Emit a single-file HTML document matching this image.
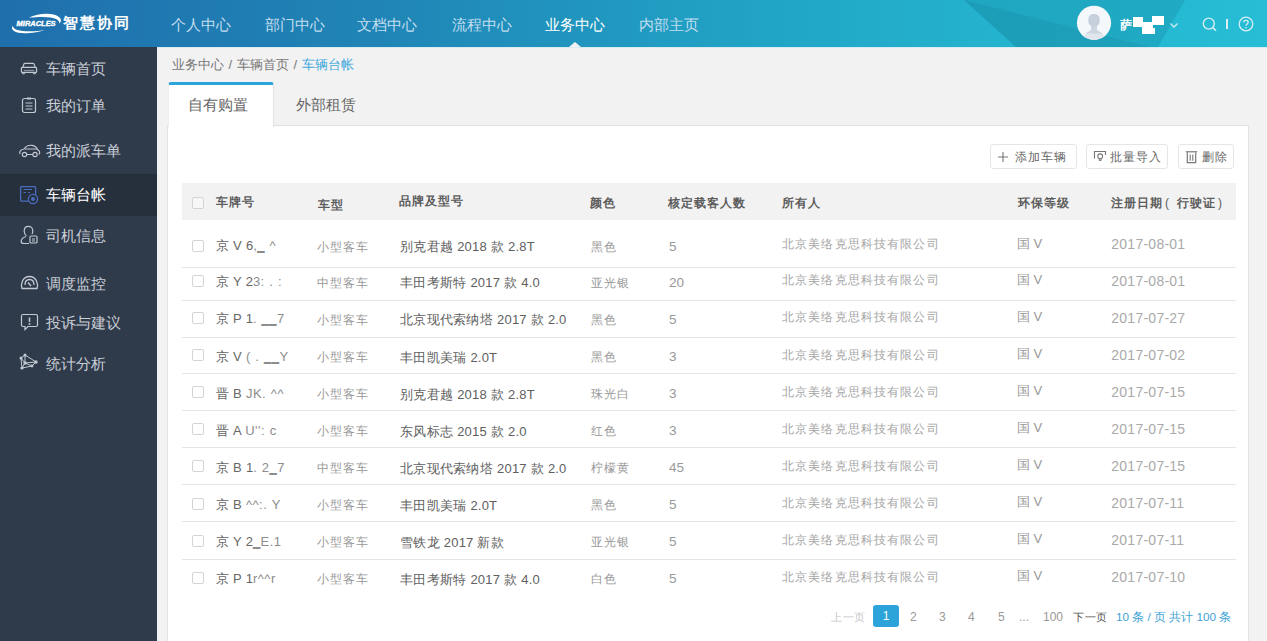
<!DOCTYPE html>
<html><head><meta charset="utf-8">
<style>
*{box-sizing:border-box;margin:0;padding:0}
html,body{width:1267px;height:641px;overflow:hidden;background:#f2f2f2;font-family:"Liberation Sans",sans-serif}
.abs{position:absolute}
#hdr{position:absolute;left:0;top:0;width:1267px;height:47px;background:linear-gradient(to right,#1f6fad 0%,#2085b6 30%,#21a4c6 60%,#24b4cf 80%,#26bdd5 100%);overflow:hidden}
.nav{position:absolute;top:15px;font-size:15px;line-height:20px;color:#c2def0;white-space:nowrap}
.nav.on{color:#fff}
#side{position:absolute;left:0;top:47px;width:157px;height:594px;background:#2f3a4b}
.si{position:absolute;left:46px;font-size:15px;line-height:20px;color:#c9ced6;white-space:nowrap}
.si.on{color:#fff}
.sic{position:absolute}
#crumb{position:absolute;left:172px;top:56px;word-spacing:1px;font-size:13px;line-height:18px;color:#777;white-space:nowrap}
#crumb span{color:#3fa9dc}
#panel{position:absolute;left:167px;top:125px;width:1082px;height:530px;background:#fff;border:1px solid #e2e2e2}
#tab1{position:absolute;left:168px;top:82px;width:106px;height:45px;background:#fff;border-top:3px solid #29a6d9;border-radius:3px 3px 0 0;border-right:1px solid #e2e2e2;border-left:1px solid #eee}
.tabt{position:absolute;top:95px;font-size:15px;line-height:20px;color:#666;white-space:nowrap}
.btn{position:absolute;top:144px;height:25px;border:1px solid #e6e6e6;border-radius:3px;background:#fff}
.btnt{position:absolute;top:148.5px;font-size:12px;letter-spacing:1px;line-height:17px;color:#666;white-space:nowrap}
#thead{position:absolute;left:182px;top:183px;width:1054px;height:37px;background:#f2f2f2}
.th{position:absolute;font-size:12px;letter-spacing:1px;line-height:17px;color:#5c5c5c;font-weight:bold;white-space:nowrap}
.cb{position:absolute;left:192px;width:12px;height:12px;border:1px solid #d4d4d4;border-radius:2px;background:#fff}
.hl{position:absolute;left:182px;width:1054px;height:1px;background:#e6e6e6}
.td{position:absolute;font-size:13px;line-height:18px;color:#999;white-space:nowrap}
.plate{left:216px;color:#666;margin-top:-0.5px;word-spacing:0.5px}
.fr{opacity:.75;letter-spacing:0.5px}
.type{left:317px;color:#999;font-size:12px;letter-spacing:1px}
.brand{left:400px;color:#606060;font-size:13px;letter-spacing:0.3px;margin-top:0.5px}
.brand .a{letter-spacing:0.2px}
.color{left:591px;color:#999;font-size:12px;letter-spacing:1px}
.seats{left:669px;color:#999;font-size:13.5px}
.owner{left:782px;color:#a5a5a5;font-size:12px;letter-spacing:1.15px;margin-top:-2.5px}
.env{left:1017px;color:#999;margin-top:-3px}
.date{left:1111.3px;color:#aaa;font-size:14px;margin-top:-2.2px;letter-spacing:0.25px}
.pg{position:absolute;top:608.5px;font-size:12px;line-height:16px;color:#999;white-space:nowrap}
</style></head><body>
<div id="hdr">
  <svg class="abs" style="left:0;top:0" width="1267" height="47">
    <polygon points="964,0 1185,0 1158,47 1016,47" fill="#1c9ab4" opacity="0.5"/>
    <polygon points="964,0 1016,47 1150,47" fill="#1a8ea8" opacity="0.35"/>
  </svg>
  <!-- logo -->
  <svg class="abs" style="left:8px;top:10px" width="56" height="28" viewBox="0 0 56 28">
    <path d="M21 7.6 C 30 3.2, 45 2.2, 51 7 C 53.5 9, 53.5 11.5, 51.5 13.5 C 51.8 9.5, 46 5.2, 21 7.6 Z" fill="#fff"/>
    <path d="M4.8 15.8 C 1.8 20.5, 8 23.8, 19 23.2 C 27 22.8, 33 21.4, 37 20 C 30 21.4, 16 22, 9.5 20 C 6.5 19, 5 17.8, 4.8 15.8 Z" fill="#fff"/>
    <text x="8.6" y="15.6" font-family="Liberation Sans" font-style="italic" font-weight="bold" font-size="6.4" fill="#fff" stroke="#fff" stroke-width="0.35" textLength="39" lengthAdjust="spacingAndGlyphs">MIRACLES</text>
  </svg>
  <div class="abs" style="left:62.5px;top:13px;font-size:15px;line-height:20px;color:#fff;font-weight:bold;letter-spacing:2.3px;white-space:nowrap">智慧协同</div>
  <div class="nav" style="left:171px">个人中心</div>
  <div class="nav" style="left:265px">部门中心</div>
  <div class="nav" style="left:357px">文档中心</div>
  <div class="nav" style="left:452px">流程中心</div>
  <div class="nav on" style="left:545px">业务中心</div>
  <div class="nav" style="left:639px">内部主页</div>
  <div class="abs" style="left:569px;top:42px;width:0;height:0;border-left:6px solid transparent;border-right:6px solid transparent;border-bottom:5px solid #f2f2f2"></div>
  <!-- avatar -->
  <svg class="abs" style="left:1076px;top:5px" width="36" height="36" viewBox="0 0 36 36">
    <circle cx="18" cy="17.8" r="17.1" fill="#f5f8fb"/>
    <clipPath id="cc"><circle cx="18" cy="17.8" r="17.1"/></clipPath>
    <g clip-path="url(#cc)">
      <ellipse cx="18" cy="32" rx="10.5" ry="5" fill="#e1e6ed"/>
      <path d="M15 20 H21 V25 C 23 26.5, 25.5 27.5, 27 28.5 H9 C 10.5 27.5, 13 26.5, 15 25 Z" fill="#ccd5e0"/>
      <rect x="12.3" y="9" width="11.4" height="12.5" rx="5" fill="#c6d0dc"/>
    </g>
  </svg>
  <div class="abs" style="left:1120px;top:16px;font-size:12px;line-height:18px;color:#fff;font-weight:bold">萨</div>
  <div class="abs" style="left:1133px;top:17px;width:10px;height:10px;background:#fff"></div>
  <div class="abs" style="left:1142px;top:22px;width:11px;height:12px;background:#fff"></div>
  <div class="abs" style="left:1152px;top:16px;width:12px;height:9px;background:#fff"></div>
  <div class="abs" style="left:1145px;top:28px;width:10px;height:6px;background:#fff"></div>
  <svg class="abs" style="left:1169px;top:22px" width="10" height="7" viewBox="0 0 10 7"><path d="M1.5 1.5 L5 5 L8.5 1.5" stroke="#cfe9f2" stroke-width="1.3" fill="none"/></svg>
  <svg class="abs" style="left:1202px;top:17px" width="16" height="15" viewBox="0 0 16 15"><circle cx="6.8" cy="6.6" r="5.5" stroke="#d8eef5" stroke-width="1.4" fill="none"/><path d="M10.8 10.6 L14 13.6" stroke="#d8eef5" stroke-width="1.5"/></svg>
  <div class="abs" style="left:1226px;top:19px;width:1.5px;height:10px;background:#d8eef5"></div>
  <svg class="abs" style="left:1238px;top:16px" width="16" height="16" viewBox="0 0 16 16"><circle cx="8" cy="8" r="6.8" stroke="#d8eef5" stroke-width="1.3" fill="none"/><path d="M5.8 6.2 C 5.8 3.8, 10.2 3.8, 10.2 6.2 C 10.2 7.8, 8 8, 8 9.8" stroke="#d8eef5" stroke-width="1.3" fill="none"/><circle cx="8" cy="11.8" r="0.8" fill="#d8eef5"/></svg>
</div>

<div class="abs" style="left:157px;top:47px;width:1110px;height:1px;background:#d9ecf4"></div>
<div id="side">
  <div class="abs" style="left:0;top:127px;width:157px;height:42px;background:#262f3c"></div>
</div>
<!-- sidebar icons & labels (page coords) -->
<svg class="sic" style="left:20px;top:62px" width="18" height="13" viewBox="0 0 18 13" fill="none" stroke="#c3c9d2" stroke-width="1.2">
  <path d="M2.7 5.4 L4 1.9 Q4.3 1.4 5 1.4 H13 Q13.7 1.4 14 1.9 L15.3 5.4"/><rect x="1.4" y="5.4" width="15.2" height="5" rx="1"/><path d="M2.6 10.4 V11.8 H4.4 V10.4 M13.6 10.4 V11.8 H15.4 V10.4" stroke-width="1"/><path d="M3.8 8.4 H14.2" stroke-width="0.7"/>
</svg>
<div class="si" style="left:46px;top:59px">车辆首页</div>
<svg class="sic" style="left:21px;top:97px" width="16" height="17" viewBox="0 0 16 17" fill="none" stroke="#c3c9d2" stroke-width="1.2">
  <rect x="1.5" y="1.5" width="13" height="14" rx="2"/><path d="M6 1.5 H10" stroke-width="2"/><path d="M4.5 6 H11.5 M4.5 9 H11.5 M4.5 12 H11.5" stroke-width="1"/>
</svg>
<div class="si" style="left:46px;top:96px">我的订单</div>
<svg class="sic" style="left:18px;top:144px" width="23" height="14" viewBox="0 0 23 14" fill="none" stroke="#c3c9d2" stroke-width="1.2">
  <path d="M2 10 C 1 7, 3 5.5, 6 5 C 8 2, 11 1, 14 1.3 C 17 1.6, 19 4, 20 6 C 22 7, 22 9, 21 10.5"/><circle cx="6.5" cy="10.5" r="2.2"/><circle cx="17" cy="10.5" r="2.2"/><path d="M8.7 10.5 H14.8 M7 5 H19"/>
</svg>
<div class="si" style="left:46px;top:141px">我的派车单</div>
<svg class="sic" style="left:19px;top:185px" width="22" height="20" viewBox="0 0 22 20" fill="none" stroke="#4a6cbc" stroke-width="1.3">
  <rect x="1.6" y="1.6" width="15" height="14.6" rx="0.8"/><path d="M4.5 4.5 H13 M4.5 7.5 H7 M9 7.5 H11" stroke-width="1.1"/><circle cx="14" cy="14" r="4.6" fill="#262f3c"/><circle cx="14" cy="14" r="2" fill="#4a6cbc" stroke="none"/>
</svg>
<div class="si on" style="left:46px;top:185px">车辆台帐</div>
<svg class="sic" style="left:20px;top:225px" width="18" height="20" viewBox="0 0 18 20" fill="none" stroke="#c3c9d2" stroke-width="1.2">
  <path d="M6.5 10.8 C 4.8 9.8, 4.2 8, 4.2 6 C 4.2 3.2, 6 1.3, 8.5 1.3 C 11 1.3, 12.8 3.2, 12.8 6 C 12.8 7.2, 12.5 8.2, 12 9"/><path d="M6 11.5 C 3 12.5, 1.2 14.5, 1.2 16.5 C 1.2 17.8, 2.2 18.5, 4 18.5 H9"/><rect x="10" y="11" width="7" height="7" rx="1"/><path d="M12 14 H15 M12 16 H15" stroke-width="1"/>
</svg>
<div class="si" style="left:46px;top:226px">司机信息</div>
<svg class="sic" style="left:20px;top:275px" width="19" height="15" viewBox="0 0 19 15" fill="none" stroke="#c3c9d2" stroke-width="1.3">
  <path d="M2 13.5 C 0.5 9, 2.5 1.5, 9.5 1.5 C 16.5 1.5, 18.5 9, 17 13.5 Z"/><path d="M5 10 C 5 6.5, 7 4.5, 9.5 4.5 C 12 4.5, 14 6.5, 14 10"/><path d="M8 7.5 L11 11" stroke-width="1.5"/>
</svg>
<div class="si" style="left:46px;top:274px">调度监控</div>
<svg class="sic" style="left:20px;top:313px" width="19" height="19" viewBox="0 0 19 19" fill="none" stroke="#c3c9d2" stroke-width="1.2">
  <path d="M3 1.5 H16 C 17 1.5, 17.5 2, 17.5 3 V12 C 17.5 13, 17 13.5, 16 13.5 H8 L5 16.5 V13.5 H3 C 2 13.5, 1.5 13, 1.5 12 V3 C 1.5 2, 2 1.5, 3 1.5 Z"/><path d="M9.5 4.5 V9" stroke-width="1.5"/><circle cx="9.5" cy="11" r="0.4" stroke-width="1.2"/>
</svg>
<div class="si" style="left:46px;top:313px">投诉与建议</div>
<svg class="sic" style="left:19px;top:353px" width="20" height="18" viewBox="0 0 20 18" fill="none" stroke="#c3c9d2" stroke-width="1">
  <path d="M2 5 L6 2 L17 9 L13 13 L3 15 Z M2 5 L6 10 L17 9 M6 2 L6 10 L3 15 M6 10 L13 13"/>
  <g fill="#c3c9d2" stroke="none"><circle cx="2" cy="5" r="1.5"/><circle cx="6" cy="2" r="1.5"/><circle cx="17" cy="9" r="1.7"/><circle cx="6" cy="10" r="1.7"/><circle cx="13" cy="13" r="1.4"/><circle cx="3" cy="15" r="1.6"/></g>
</svg>
<div class="si" style="left:46px;top:354px">统计分析</div>

<div id="crumb">业务中心 / 车辆首页 / <span>车辆台帐</span></div>
<div id="panel"></div>
<div id="tab1"></div>
<div class="tabt" style="left:188px">自有购置</div>
<div class="tabt" style="left:296px">外部租赁</div>

<div class="btn" style="left:990px;width:87px"></div>
<svg class="abs" style="left:997px;top:151px" width="12" height="12" viewBox="0 0 12 12"><path d="M6 1 V11 M1 6 H11" stroke="#777" stroke-width="1.1"/></svg>
<div class="btnt" style="left:1015px">添加车辆</div>
<div class="btn" style="left:1086px;width:82px"></div>
<svg class="abs" style="left:1093px;top:150px" width="14" height="12" viewBox="0 0 14 12" fill="none" stroke="#777" stroke-width="1.1"><path d="M1.5 8.5 V1.5 H12.5 V5"/><circle cx="7.2" cy="6.3" r="2.4"/><path d="M6.3 8.7 V10.5 H8.1 V8.7" stroke-width="1"/></svg>
<div class="btnt" style="left:1110px">批量导入</div>
<div class="btn" style="left:1178px;width:56px"></div>
<svg class="abs" style="left:1185px;top:150px" width="13" height="14" viewBox="0 0 13 14" fill="none" stroke="#777" stroke-width="1.2"><path d="M0.8 1.8 H12.2"/><path d="M2.3 2.5 V12.6 H10.7 V2.5"/><path d="M5.2 4.5 V10.8 M7.8 4.5 V10.8" stroke-width="1.1"/></svg>
<div class="btnt" style="left:1202px">删除</div>

<div id="thead"></div>
<div class="cb" style="top:197px;background:#f7f7f7"></div>
<div class="th" style="left:216px;top:194px">车牌号</div>
<div class="th" style="left:318px;top:197px">车型</div>
<div class="th" style="left:399px;top:193px">品牌及型号</div>
<div class="th" style="left:590px;top:195px">颜色</div>
<div class="th" style="left:668px;top:195px">核定载客人数</div>
<div class="th" style="left:782px;top:195px">所有人</div>
<div class="th" style="left:1018px;top:195px">环保等级</div>
<div class="th" style="left:1111px;top:195px">注册日期<span style="margin-left:2px;font-weight:normal">(</span><span style="margin-left:7px">行驶证</span><span style="margin-left:2px;font-weight:normal">)</span></div>

<div class="hl" style="top:267.0px"></div>
<div class="hl" style="top:300.0px"></div>
<div class="hl" style="top:337.0px"></div>
<div class="hl" style="top:373.0px"></div>
<div class="hl" style="top:410.0px"></div>
<div class="hl" style="top:447.0px"></div>
<div class="hl" style="top:484.0px"></div>
<div class="hl" style="top:521.0px"></div>
<div class="hl" style="top:559.0px"></div>
<div class="cb" style="top:240.0px"></div>
<div class="td plate" style="top:237.5px">京 V 6<span class='fr'>,‗ ^</span></div>
<div class="td type" style="top:237.5px">小型客车</div>
<div class="td brand" style="top:237.5px">别克君越 <span class="a">2018</span> 款 <span class="a">2.8T</span></div>
<div class="td color" style="top:237.5px">黑色</div>
<div class="td seats" style="top:237.5px">5</div>
<div class="td owner" style="top:237.5px">北京美络克思科技有限公司</div>
<div class="td env" style="top:237.5px">国 V</div>
<div class="td date" style="top:237.5px">2017-08-01</div>
<div class="cb" style="top:275.0px"></div>
<div class="td plate" style="top:273.8px">京 Y 2<span class='fr'>3: . :</span></div>
<div class="td type" style="top:273.8px">中型客车</div>
<div class="td brand" style="top:273.8px">丰田考斯特 <span class="a">2017</span> 款 <span class="a">4.0</span></div>
<div class="td color" style="top:273.8px">亚光银</div>
<div class="td seats" style="top:273.8px">20</div>
<div class="td owner" style="top:273.8px">北京美络克思科技有限公司</div>
<div class="td env" style="top:273.8px">国 V</div>
<div class="td date" style="top:273.8px">2017-08-01</div>
<div class="cb" style="top:312.1px"></div>
<div class="td plate" style="top:310.9px">京 P 1<span class='fr'>. ‗‗7</span></div>
<div class="td type" style="top:310.9px">小型客车</div>
<div class="td brand" style="top:310.9px">北京现代索纳塔 <span class="a">2017</span> 款 <span class="a">2.0</span></div>
<div class="td color" style="top:310.9px">黑色</div>
<div class="td seats" style="top:310.9px">5</div>
<div class="td owner" style="top:310.9px">北京美络克思科技有限公司</div>
<div class="td env" style="top:310.9px">国 V</div>
<div class="td date" style="top:310.9px">2017-07-27</div>
<div class="cb" style="top:349.2px"></div>
<div class="td plate" style="top:348.0px">京 V <span class='fr'>( . ‗‗Y</span></div>
<div class="td type" style="top:348.0px">小型客车</div>
<div class="td brand" style="top:348.0px">丰田凯美瑞 <span class="a">2.0T</span></div>
<div class="td color" style="top:348.0px">黑色</div>
<div class="td seats" style="top:348.0px">3</div>
<div class="td owner" style="top:348.0px">北京美络克思科技有限公司</div>
<div class="td env" style="top:348.0px">国 V</div>
<div class="td date" style="top:348.0px">2017-07-02</div>
<div class="cb" style="top:386.2px"></div>
<div class="td plate" style="top:385.0px">晋 B <span class='fr'>JK. ^^</span></div>
<div class="td type" style="top:385.0px">小型客车</div>
<div class="td brand" style="top:385.0px">别克君越 <span class="a">2018</span> 款 <span class="a">2.8T</span></div>
<div class="td color" style="top:385.0px">珠光白</div>
<div class="td seats" style="top:385.0px">3</div>
<div class="td owner" style="top:385.0px">北京美络克思科技有限公司</div>
<div class="td env" style="top:385.0px">国 V</div>
<div class="td date" style="top:385.0px">2017-07-15</div>
<div class="cb" style="top:423.3px"></div>
<div class="td plate" style="top:422.1px">晋 A <span class='fr'>U'': c</span></div>
<div class="td type" style="top:422.1px">小型客车</div>
<div class="td brand" style="top:422.1px">东风标志 <span class="a">2015</span> 款 <span class="a">2.0</span></div>
<div class="td color" style="top:422.1px">红色</div>
<div class="td seats" style="top:422.1px">3</div>
<div class="td owner" style="top:422.1px">北京美络克思科技有限公司</div>
<div class="td env" style="top:422.1px">国 V</div>
<div class="td date" style="top:422.1px">2017-07-15</div>
<div class="cb" style="top:460.4px"></div>
<div class="td plate" style="top:459.2px">京 B 1<span class='fr'>. 2‗7</span></div>
<div class="td type" style="top:459.2px">中型客车</div>
<div class="td brand" style="top:459.2px">北京现代索纳塔 <span class="a">2017</span> 款 <span class="a">2.0</span></div>
<div class="td color" style="top:459.2px">柠檬黄</div>
<div class="td seats" style="top:459.2px">45</div>
<div class="td owner" style="top:459.2px">北京美络克思科技有限公司</div>
<div class="td env" style="top:459.2px">国 V</div>
<div class="td date" style="top:459.2px">2017-07-15</div>
<div class="cb" style="top:497.5px"></div>
<div class="td plate" style="top:496.3px">京 B <span class='fr'>^^:. Y</span></div>
<div class="td type" style="top:496.3px">小型客车</div>
<div class="td brand" style="top:496.3px">丰田凯美瑞 <span class="a">2.0T</span></div>
<div class="td color" style="top:496.3px">黑色</div>
<div class="td seats" style="top:496.3px">5</div>
<div class="td owner" style="top:496.3px">北京美络克思科技有限公司</div>
<div class="td env" style="top:496.3px">国 V</div>
<div class="td date" style="top:496.3px">2017-07-11</div>
<div class="cb" style="top:534.6px"></div>
<div class="td plate" style="top:533.4px">京 Y 2<span class='fr'>‗E.1</span></div>
<div class="td type" style="top:533.4px">小型客车</div>
<div class="td brand" style="top:533.4px">雪铁龙 <span class="a">2017</span> 新款</div>
<div class="td color" style="top:533.4px">亚光银</div>
<div class="td seats" style="top:533.4px">5</div>
<div class="td owner" style="top:533.4px">北京美络克思科技有限公司</div>
<div class="td env" style="top:533.4px">国 V</div>
<div class="td date" style="top:533.4px">2017-07-11</div>
<div class="cb" style="top:571.6px"></div>
<div class="td plate" style="top:570.4px">京 P 1<span class='fr'>r^^r</span></div>
<div class="td type" style="top:570.4px">小型客车</div>
<div class="td brand" style="top:570.4px">丰田考斯特 <span class="a">2017</span> 款 <span class="a">4.0</span></div>
<div class="td color" style="top:570.4px">白色</div>
<div class="td seats" style="top:570.4px">5</div>
<div class="td owner" style="top:570.4px">北京美络克思科技有限公司</div>
<div class="td env" style="top:570.4px">国 V</div>
<div class="td date" style="top:570.4px">2017-07-10</div>

<div class="pg" style="left:831px;color:#c8c8c8;font-size:11px;letter-spacing:0.6px">上一页</div>
<div class="abs" style="left:873px;top:605px;width:26px;height:22px;background:#2ca4d9;border-radius:3px;color:#fff;font-size:12px;line-height:22px;text-align:center">1</div>
<div class="pg" style="left:910px">2</div>
<div class="pg" style="left:939px">3</div>
<div class="pg" style="left:968px">4</div>
<div class="pg" style="left:998px">5</div>
<div class="pg" style="left:1019px">...</div>
<div class="pg" style="left:1043px">100</div>
<div class="pg" style="left:1073px;color:#555;font-size:11px;letter-spacing:0.6px">下一页</div>
<div class="pg" style="left:1116px;color:#3ea3d6;font-size:11.7px">10 条 / 页 共计 100 条</div>
</body></html>
